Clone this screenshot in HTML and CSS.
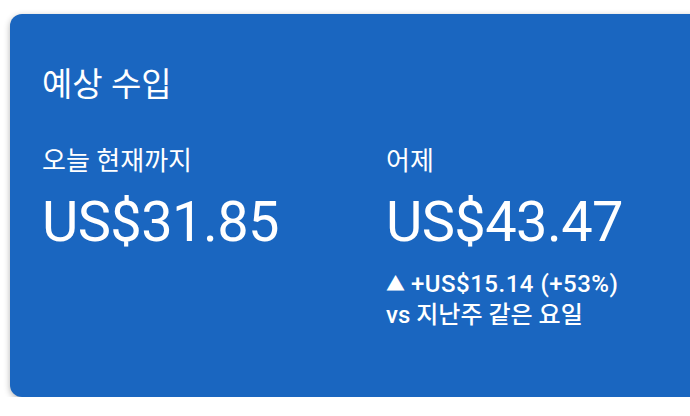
FILE: index.html
```html
<!DOCTYPE html>
<html lang="ko">
<head>
    <meta charset="UTF-8">
    <meta name="viewport" content="width=device-width, initial-scale=1.0">
    <title>예상 수입</title>
    <link rel="stylesheet" href="styles.css">
</head>
<body>
<div class="card">
    <h2 class="card-title">예상 수입</h2>
    <div class="stats">
        <div class="stat">
            <div class="stat-label">오늘 현재까지</div>
            <div class="stat-value">US$31.85</div>
        </div>
        <div class="stat">
            <div class="stat-label">어제</div>
            <div class="stat-value">US$43.47</div>
            <div class="stat-change"><span class="arrow">▲</span> <span class="delta">+US$15.14 (+53%)</span><br>vs 지난주 같은 요일</div>
        </div>
    </div>
</div>
</body>
</html>
```

FILE: styles.css
```css
/* 페이지 기본 */
body {
    margin: 0;
    background-color: white;
    font-family: Roboto, "Noto Sans CJK KR", sans-serif;
    color: white;
}

/* 파란 카드, 오른쪽은 화면 밖으로 이어짐 */
.card {
    margin: 14px -20px 0 10px;
    height: 383px;
    box-sizing: border-box;
    padding: 51px 32px 0;
    background-color: #1a66c0;
    border-radius: 12px;
    box-shadow: 0 2px 6px rgba(0,0,0,0.3);
}

.card-title {
    margin: 0;
    font-size: 33px;
    font-weight: 400;
    line-height: 40px;
}

.stats {
    display: grid;
    grid-template-columns: 344px 1fr;
    margin-top: 40px;
}

.stat-label {
    font-size: 26px;
    line-height: 32px;
}

.stat-value {
    margin-top: 15px;
    font-size: 56px;
    line-height: 60px;
    letter-spacing: -0.6px;
}

.stat-change {
    margin-top: 17px;
    font-size: 24px;
    line-height: 30px;
    font-weight: 500;
}

.arrow {
    font-size: 19px;
    vertical-align: 1px;
}

.delta {
    letter-spacing: 0.5px;
}
```
